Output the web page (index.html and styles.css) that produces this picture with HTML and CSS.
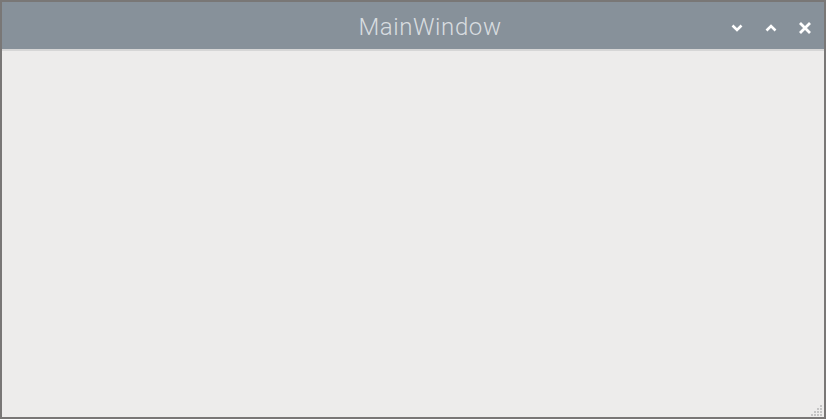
FILE: index.html
```html
<!DOCTYPE html>
<html lang="en">
<head>
    <meta charset="UTF-8">
    <title>MainWindow</title>
    <link rel="stylesheet" href="styles.css">
</head>
<body>
    <div class="window">
        <div class="titlebar">
            <span class="title">MainWindow</span>
            <div class="controls">
                <button class="ctl" title="Minimize">
                    <svg width="14" height="14" viewBox="0 0 14 14"><path d="M2.5 4.5 L7 9 L11.5 4.5" fill="none" stroke="#fff" stroke-width="2.6"/></svg>
                </button>
                <button class="ctl" title="Maximize">
                    <svg width="14" height="14" viewBox="0 0 14 14"><path d="M2.5 9.5 L7 5 L11.5 9.5" fill="none" stroke="#fff" stroke-width="2.6"/></svg>
                </button>
                <button class="ctl" title="Close">
                    <svg width="14" height="14" viewBox="0 0 14 14"><path d="M2 2 L12 12 M12 2 L2 12" fill="none" stroke="#fff" stroke-width="2.8"/></svg>
                </button>
            </div>
        </div>
        <div class="content">
            <div class="grip">
                <svg width="14" height="14" viewBox="0 0 14 14">
                    <g fill="#c4c4c4">
                        <rect x="11" y="1" width="2" height="2"/>
                        <rect x="8" y="4" width="2" height="2"/><rect x="11" y="4" width="2" height="2"/>
                        <rect x="5" y="7" width="2" height="2"/><rect x="8" y="7" width="2" height="2"/><rect x="11" y="7" width="2" height="2"/>
                        <rect x="2" y="10" width="2" height="2"/><rect x="5" y="10" width="2" height="2"/><rect x="8" y="10" width="2" height="2"/><rect x="11" y="10" width="2" height="2"/>
                    </g>
                </svg>
            </div>
        </div>
    </div>
</body>
</html>
```

FILE: styles.css
```css
html, body {
    margin: 0;
    height: 100%;
}

body {
    font-family: Roboto, "Noto Sans", sans-serif;
    background: #7a7876;
}

.window {
    box-sizing: border-box;
    height: 419px;
    width: 826px;
    border: 2px solid #797776;
    display: flex;
    flex-direction: column;
    background: #edeceb;
}

.titlebar {
    height: 47px;
    background: #87919a;
    border-bottom: 2px solid #d6d6d6;
    display: flex;
    align-items: center;
    justify-content: center;
    position: relative;
}

.title {
    color: #d9dde0;
    font-size: 24px;
    font-weight: 300;
    letter-spacing: 0.6px;
    margin-left: 34px;
    margin-top: 3px;
}

.controls {
    position: absolute;
    right: 0;
    top: 0;
    height: 100%;
    display: flex;
    align-items: center;
    gap: 20px;
    padding-right: 12px;
}

.ctl {
    border: none;
    background: none;
    padding: 0;
    width: 14px;
    height: 14px;
    display: flex;
    margin-top: 5px;
}

.content {
    flex: 1;
    position: relative;
}

.grip {
    position: absolute;
    right: 1px;
    bottom: 0;
    width: 14px;
    height: 14px;
}
```
